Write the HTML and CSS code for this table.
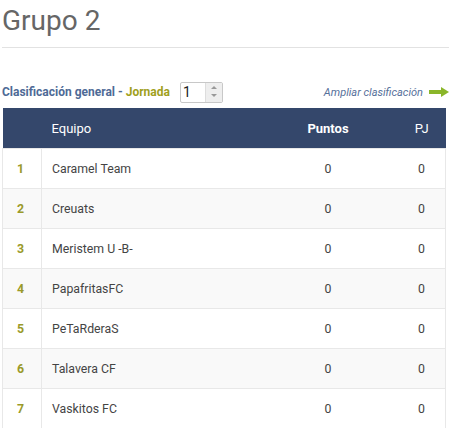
FILE: index.html
```html
<!DOCTYPE html>
<html lang="es">
<head>
<meta charset="utf-8">
<link rel="stylesheet" href="styles.css">
</head>
<body>
<div class="page">
  <h1 class="title">Grupo 2</h1>
  <div class="bar">
    <div class="left">
      <span class="clas">Clasificación general</span>
      <span class="sep"> - </span>
      <span class="jor">Jornada</span>
      <span class="spin"><span class="val">1</span><span class="arrows"><span class="up"></span><span class="down"></span></span></span>
    </div>
    <a class="more">Ampliar clasificación
      <svg width="20" height="10" viewBox="0 0 20 10"><rect x="0" y="3" width="13" height="4" fill="#8ab62a"/><polygon points="12,0 20,5 12,10" fill="#8ab62a"/></svg>
    </a>
  </div>
  <table class="tbl">
    <thead>
      <tr><th class="pos"></th><th class="team">Equipo</th><th class="pts">Puntos</th><th class="pj">PJ</th></tr>
    </thead>
    <tbody>
      <tr><td class="pos">1</td><td class="team">Caramel Team</td><td class="pts">0</td><td class="pj">0</td></tr>
      <tr><td class="pos">2</td><td class="team">Creuats</td><td class="pts">0</td><td class="pj">0</td></tr>
      <tr><td class="pos">3</td><td class="team">Meristem U -B-</td><td class="pts">0</td><td class="pj">0</td></tr>
      <tr><td class="pos">4</td><td class="team">PapafritasFC</td><td class="pts">0</td><td class="pj">0</td></tr>
      <tr><td class="pos">5</td><td class="team">PeTaRderaS</td><td class="pts">0</td><td class="pj">0</td></tr>
      <tr><td class="pos">6</td><td class="team">Talavera CF</td><td class="pts">0</td><td class="pj">0</td></tr>
      <tr><td class="pos">7</td><td class="team">Vaskitos FC</td><td class="pts">0</td><td class="pj">0</td></tr>
    </tbody>
  </table>
</div>
</body>
</html>
```
FILE: styles.css
```css
html, body { margin: 0; padding: 0; background: #fff; }
body { font-family: Roboto, "Liberation Sans", sans-serif; color: #555; }
.page { padding: 0 3px 0 2px; }
.title {
  margin: 0 -3px 0 0;
  padding: 4px 0 0 0;
  height: 43px;
  font-size: 28px;
  font-weight: 400;
  line-height: 34px;
  color: #666;
  border-bottom: 1px solid #e2e2e2;
}
.bar {
  display: flex;
  justify-content: space-between;
  align-items: center;
  margin-top: 32px;
  height: 24px;
}
.left { display: flex; align-items: center; font-size: 12px; font-weight: 700; }
.clas { color: #4e6a96; }
.sep { color: #4e6a96; white-space: pre; }
.jor { color: #a0a01c; }
.spin {
  display: flex; margin-left: 10px; width: 43px; height: 21px;
  border: 1px solid #c8c8c8; border-radius: 2px; box-sizing: border-box;
  font-weight: 400; font-size: 14px; color: #222;
}
.val { flex: 1; padding-left: 2px; line-height: 19px; }
.arrows { width: 16px; display: flex; flex-direction: column; background: #eee; border-left: 1px solid #ddd; }
.up, .down { flex: 1; position: relative; }
.up::after, .down::after {
  content: ""; position: absolute; left: 5px; top: 3px;
  border-left: 3px solid transparent; border-right: 3px solid transparent;
}
.up::after { border-bottom: 3px solid #999; }
.down::after { border-top: 3px solid #999; top: 2px; }
.more {
  display: flex; align-items: center; gap: 6px;
  font-size: 11px; font-style: italic; color: #56709a; margin-right: -3px;
}
.tbl {
  width: 100%;
  border-collapse: collapse;
  margin-top: 4px;
  font-size: 12px;
}
.tbl th {
  background: #34476b;
  color: #fff;
  height: 40px;
  font-size: 13px;
  font-weight: 400;
  text-align: left;
  padding: 0;
}
.tbl th.pts { font-weight: 700; text-align: center; }
.tbl th.pj { text-align: center; }
.tbl td {
  height: 39px;
  padding: 0;
  border-top: 1px solid #e8e8e8;
  color: #444;
  font-size: 12.3px;
}
.tbl tbody tr:nth-child(even) td { background: #f9f9f9; }
.tbl tbody tr td:first-child { border-left: 1px solid #e8e8e8; }
.tbl tbody tr td:last-child { border-right: 1px solid #e8e8e8; }
.tbl td.pos { width: 39px; border-right: 1px solid #e8e8e8; text-align: left; padding-left: 14px; box-sizing: border-box; color: #9a9a2a; font-weight: 700; }
.tbl th.pos { width: 39px; }
.tbl td.team, .tbl th.team { padding-left: 10px; }
.tbl td.pts, .tbl th.pts { width: 140px; text-align: center; }
.tbl td.pj, .tbl th.pj { width: 47px; text-align: center; }
```
